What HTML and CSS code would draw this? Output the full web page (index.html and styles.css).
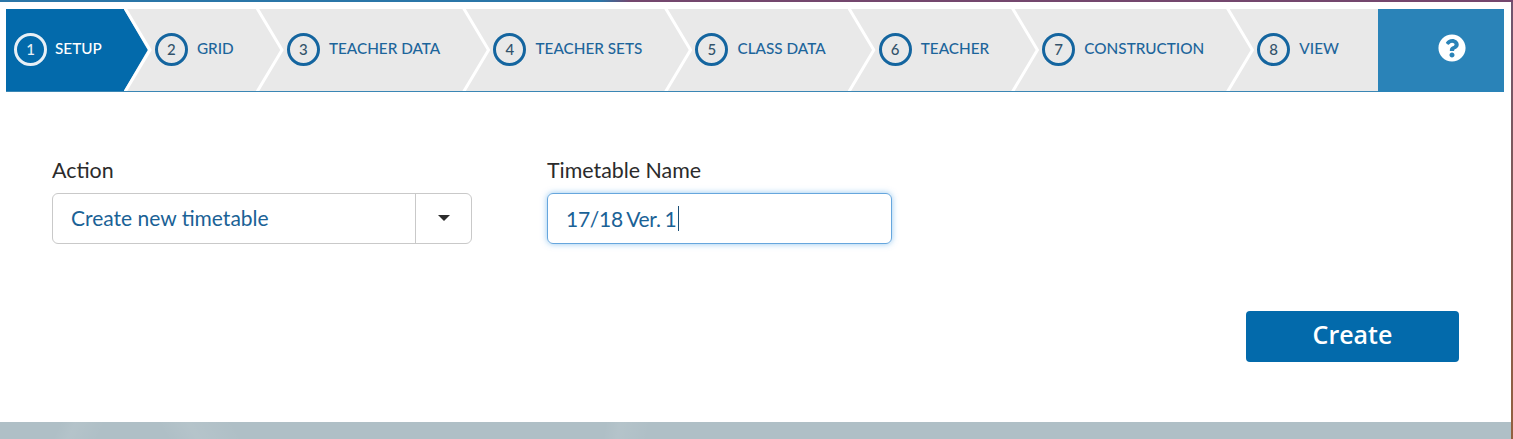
FILE: index.html
```html
<!DOCTYPE html>
<html lang="en">
<head>
    <meta charset="UTF-8">
    <meta name="viewport" content="width=device-width, initial-scale=1.0">
    <title>Timetable Setup</title>
    <link rel="stylesheet" href="styles.css">
</head>
<body>

<div class="top-strip">
    <div class="top-strip-blue"></div>
    <div class="top-strip-purple"></div>
</div>

<div class="page">
    <div class="wizard">
        <div class="step active"><span class="num">1</span><span class="step-name">SETUP</span></div>
        <div class="step"><span class="num">2</span><span class="step-name">GRID</span></div>
        <div class="step"><span class="num">3</span><span class="step-name">TEACHER DATA</span></div>
        <div class="step"><span class="num">4</span><span class="step-name">TEACHER SETS</span></div>
        <div class="step"><span class="num">5</span><span class="step-name">CLASS DATA</span></div>
        <div class="step"><span class="num">6</span><span class="step-name">TEACHER</span></div>
        <div class="step"><span class="num">7</span><span class="step-name">CONSTRUCTION</span></div>
        <div class="step last"><span class="num">8</span><span class="step-name">VIEW</span></div>
        <div class="help">
            <svg class="help-icon" viewBox="0 0 512 512"><path fill="#fff" d="M504 256c0 136.997-111.043 248-248 248S8 392.997 8 256C8 119.083 119.043 8 256 8s248 111.083 248 248zM262.655 90c-54.497 0-89.255 22.957-116.549 63.758-3.536 5.286-2.353 12.415 2.715 16.258l34.699 26.31c5.205 3.947 12.621 3.008 16.665-2.122 17.864-22.658 30.113-35.797 57.303-35.797 20.429 0 45.698 13.148 45.698 32.958 0 14.976-12.363 22.667-32.534 33.976C247.128 238.528 216 254.941 216 296v4c0 6.627 5.373 12 12 12h56c6.627 0 12-5.373 12-12v-1.333c0-28.462 83.186-29.647 83.186-106.667 0-58.002-60.165-102-116.531-102zM256 338c-25.365 0-46 20.635-46 46 0 25.364 20.635 46 46 46s46-20.636 46-46c0-25.365-20.635-46-46-46z"/></svg>
        </div>
    </div>

    <div class="form-row">
        <div class="field">
            <label class="field-label">Action</label>
            <div class="select-box">
                <span class="select-value">Create new timetable</span>
                <span class="select-arrow"><span class="caret"></span></span>
            </div>
        </div>
        <div class="field">
            <label class="field-label">Timetable Name</label>
            <div class="text-box"><span class="text-value">17/18 Ver. 1</span><span class="cursor"></span></div>
        </div>
    </div>

    <div class="actions">
        <button class="create-btn" type="button">Create</button>
    </div>

    <div class="footer-band"></div>
</div>

</body>
</html>
```

FILE: styles.css
```css
html, body {
    margin: 0;
    padding: 0;
    height: 439px;
    overflow: hidden;
}
body {
    font-family: Lato, "Open Sans", sans-serif;
    background: linear-gradient(#6f5470, #7d5a5a 40%, #93603f);
}
.top-strip {
    display: flex;
    height: 2px;
}
.top-strip-blue {
    width: 600px;
    background: #2a76a8;
}
.top-strip-purple {
    flex: 1;
    background: linear-gradient(90deg, #2a76a8, #74476e 30px);
}
.page {
    width: 1511px;
    height: 437px;
    background: #fff;
    display: flex;
    flex-direction: column;
}

/* wizard */
.wizard {
    display: flex;
    height: 82px;
    margin: 7px 7px 0 6px;
    background: #e9e9e9;
    border-bottom: 1px solid #3a86b4;
    flex-shrink: 0;
}
.step {
    display: flex;
    align-items: center;
    padding: 0 22px 0 31px;
    position: relative;
    color: #1d659b;
    font-size: 15.3px;
    font-weight: 500;
}
.step:first-child {
    padding-left: 8px;
}
.step.last {
    flex: 1;
}
/* white divider between steps */
.step::after {
    content: "";
    position: absolute;
    top: 0;
    bottom: 0;
    right: -28px;
    width: 28px;
    background: #fff;
    clip-path: polygon(0 0, 3.5px 0, 28px 50%, 3.5px 100%, 0 100%, 24.5px 50%);
    z-index: 2;
}
.step.last::after {
    display: none;
}
.step.active {
    background: #036aab;
    color: #fff;
}
.step.active::before {
    content: "";
    position: absolute;
    top: 0;
    bottom: 0;
    right: -24px;
    width: 26px;
    background: #036aab;
    clip-path: polygon(0 0, 2px 0, 100% 50%, 2px 100%, 0 100%);
    z-index: 1;
}
.num {
    width: 27px;
    height: 27px;
    border: 3px solid #14659f;
    border-radius: 50%;
    display: flex;
    align-items: center;
    justify-content: center;
    margin-right: 9.2px;
    margin-top: -2px;
    font-size: 15px;
    color: #33536b;
    flex-shrink: 0;
}
.step.active .num {
    border-color: #e8f0f6;
    color: #e8f0f6;
    margin-right: 8px;
}
.step-name {
    margin-top: -4px;
}
.help {
    width: 104px;
    padding-left: 22px;
    background: #2a83b8;
    display: flex;
    align-items: center;
    justify-content: center;
    flex-shrink: 0;
    margin-bottom: -1px;
}
.help-icon {
    width: 28px;
    height: 28px;
    margin-top: -6px;
}

/* form */
.form-row {
    display: flex;
    gap: 75px;
    padding: 66px 0 0 52px;
}
.field-label {
    display: block;
    font-size: 21.4px;
    line-height: 24px;
    color: #2b2b2b;
    margin-bottom: 11px;
}
.select-box {
    width: 418px;
    height: 49px;
    border: 1px solid #c9c9c9;
    border-radius: 6px;
    display: flex;
    align-items: center;
    color: #1a6296;
    font-size: 21px;
}
.select-value {
    flex: 1;
    padding: 0 0 3px 18px;
}
.select-arrow {
    width: 55px;
    height: 100%;
    border-left: 1px solid #c9c9c9;
    display: flex;
    align-items: center;
    justify-content: center;
}
.caret {
    width: 0;
    height: 0;
    border-left: 6px solid transparent;
    border-right: 6px solid transparent;
    border-top: 6px solid #2b2b2b;
    margin-top: -1px;
}
.text-box {
    width: 325px;
    height: 49px;
    border: 1px solid #66a6dd;
    border-radius: 6px;
    box-shadow: 0 0 6px rgba(102, 175, 233, 0.7);
    display: flex;
    align-items: center;
    padding-left: 18px;
    color: #1a6296;
    font-size: 21px;
}
.text-value {
    word-spacing: -1.2px;
    letter-spacing: -0.25px;
    padding-bottom: 1px;
}
.cursor {
    width: 1px;
    height: 25px;
    background: #1a4f78;
    margin-left: 1px;
}

/* button */
.actions {
    display: flex;
    justify-content: flex-end;
    padding: 67px 52px 0 0;
}
.create-btn {
    width: 213px;
    height: 51px;
    border: none;
    border-radius: 4px;
    background: #036aab;
    color: #fff;
    font-family: "Open Sans", sans-serif;
    font-weight: 600;
    font-size: 25px;
    padding: 0 0 6px;
}

/* faint pattern on the band under the panel */
.footer-band {
    margin-top: auto;
    height: 17px;
    background:
        linear-gradient(115deg, transparent 4%, rgba(255, 255, 255, 0.07) 5%, transparent 7%),
        linear-gradient(60deg, transparent 11%, rgba(255, 255, 255, 0.08) 13%, transparent 16%),
        linear-gradient(100deg, transparent 40%, rgba(255, 255, 255, 0.07) 41%, transparent 43%),
        #afbfc6;
}
```
